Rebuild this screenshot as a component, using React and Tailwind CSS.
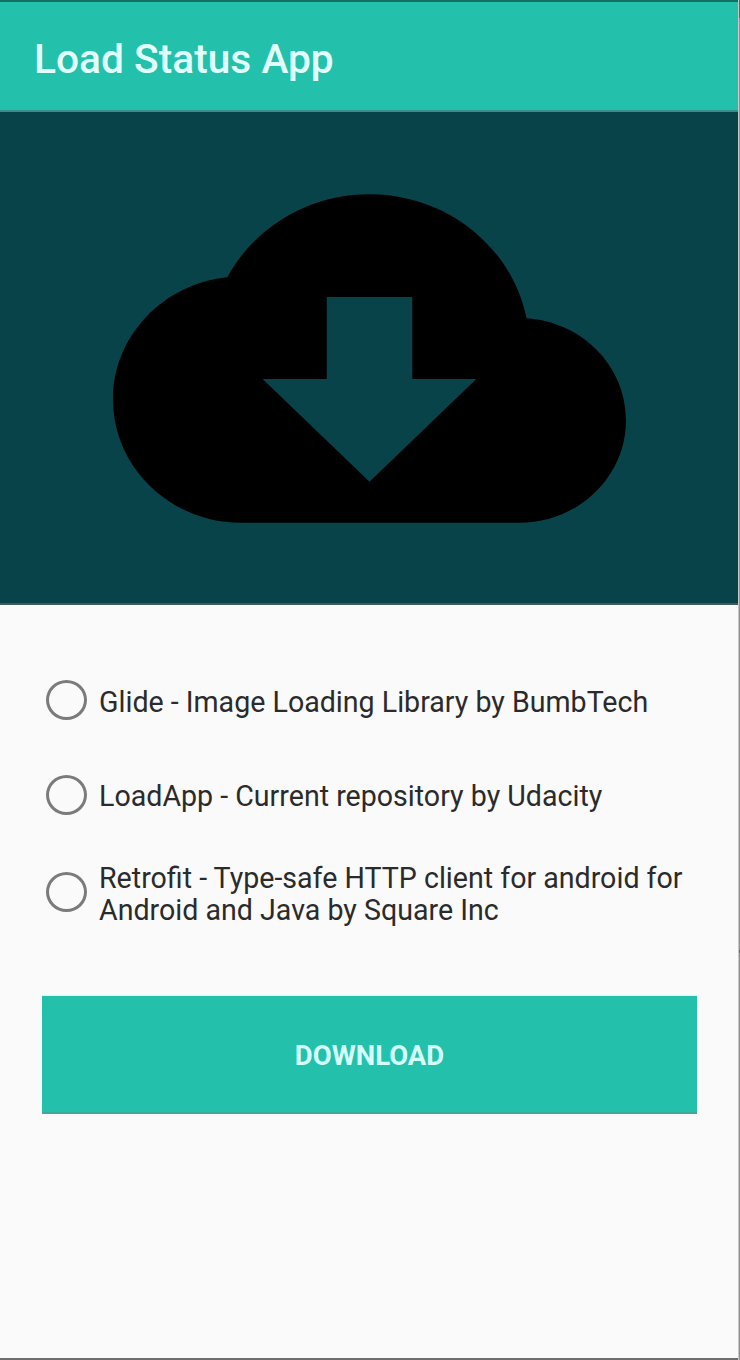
const options = [
  { id: 'glide', lines: ['Glide - Image Loading Library by BumbTech'], row: 'h-[94px]' },
  { id: 'loadapp', lines: ['LoadApp - Current repository by Udacity'], row: 'h-[95px]' },
  {
    id: 'retrofit',
    lines: ['Retrofit - Type-safe HTTP client for android for', 'Android and Java by Square Inc'],
    row: 'h-[100px]',
  },
];

function CloudDownload() {
  return (
    <svg
      className="h-[493px] w-[513px]"
      viewBox="0 0 24 24"
      preserveAspectRatio="none"
      fill="#000"
      aria-hidden="true"
    >
      <path d="M19.35 10.04C18.67 6.59 15.64 4 12 4 9.11 4 6.6 5.64 5.35 8.04 2.34 8.36 0 10.91 0 14c0 3.31 2.69 6 6 6h13c2.76 0 5-2.24 5-5 0-2.64-2.05-4.78-4.65-4.96zM17 13l-5 5-5-5h3V9h4v4h3z" />
    </svg>
  );
}

function Option({ lines, row }) {
  return (
    <label className={`flex items-center ${row}`}>
      <span className="h-10 w-[41px] shrink-0 rounded-[50%] border-[3.5px] border-[#7b7b7b]" />
      <span className="ml-3 pt-[3px] text-[28.6px] leading-8 whitespace-nowrap text-[#2b2b2b]">
        {lines.map((line) => (
          <span key={line} className="block">
            {line}
          </span>
        ))}
      </span>
    </label>
  );
}

export default function App() {
  return (
    <div className="flex h-[1360px] w-[740px] overflow-hidden bg-[#fafafa] font-[Roboto,sans-serif]">
      <div className="flex w-[738px] flex-col border-b-2 border-[#6d6d6d]">
        <header className="flex h-[112px] items-center border-t-2 border-b-2 border-t-[#156e62] border-b-[#3a8d88] bg-[#23c1ab] pt-2 pl-[34px]">
          <h1 className="text-[40.7px] font-medium text-[#e2fffc]">Load Status App</h1>
        </header>
        <div className="flex h-[493px] shrink-0 items-start justify-center border-b-2 border-[#43595c] bg-[#074349]">
          <CloudDownload />
        </div>
        <main className="flex flex-col pt-[48px] pr-[42px] pl-[42px]">
          <div className="flex flex-col pl-1">
            {options.map((option) => (
              <Option key={option.id} {...option} />
            ))}
          </div>
          <button className="mt-[54px] h-[118px] w-[655px] border-b-2 border-[#45a697] bg-[#23c1ab] pt-1 text-[27.5px] font-bold text-[#d5fffa] shadow-[0_-1px_1px_#c5fffa]">
            DOWNLOAD
          </button>
        </main>
      </div>
      <div className="flex w-[2px] flex-col border-l border-[#c8c8c8] bg-[#929292]">
        <div className="h-[18px] bg-[#32863c]" />
        <div className="mt-[932px] h-[3px] bg-[#666]" />
      </div>
    </div>
  );
}
